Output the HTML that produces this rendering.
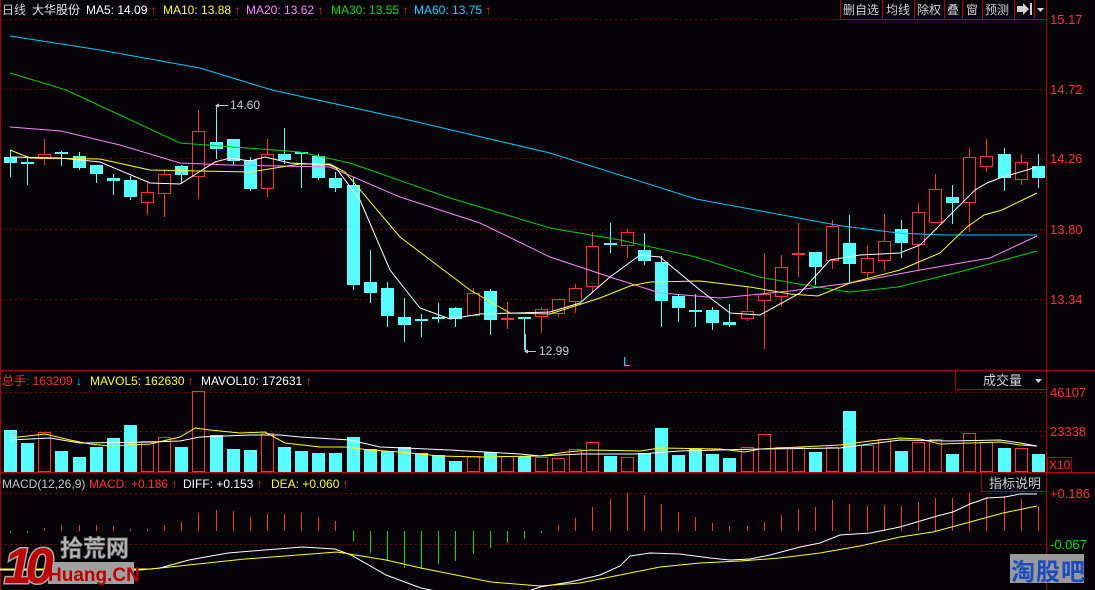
<!DOCTYPE html>
<html><head><meta charset="utf-8"><style>
html,body{margin:0;padding:0;background:#050308;width:1095px;height:590px;overflow:hidden}
svg{display:block;font-family:"Liberation Sans","Noto Sans CJK SC",sans-serif;font-size:12px}
.ar{font-weight:bold}
</style></head><body>
<svg id="s" width="1095" height="590" viewBox="0 0 1095 590" xmlns="http://www.w3.org/2000/svg">
<rect width="1095" height="590" fill="#050308"/>
<g stroke="#8a0000" stroke-width="1" stroke-dasharray="2,3">
<line x1="0" y1="19.5" x2="840" y2="19.5"/>
<line x1="0" y1="89.5" x2="1046" y2="89.5"/>
<line x1="0" y1="158.5" x2="1046" y2="158.5"/>
<line x1="0" y1="229.5" x2="1046" y2="229.5"/>
<line x1="0" y1="299.5" x2="1046" y2="299.5"/>
<line x1="0" y1="392.5" x2="1046" y2="392.5"/>
<line x1="0" y1="431.5" x2="1046" y2="431.5"/>
<line x1="0" y1="493.5" x2="1046" y2="493.5"/>
<line x1="0" y1="544.5" x2="1046" y2="544.5"/>
</g>
<g stroke="#b00000" stroke-width="1" fill="none">
<line x1="0.5" y1="0" x2="0.5" y2="590"/>
<line x1="1046.5" y1="0" x2="1046.5" y2="590"/>
<line x1="0" y1="370.5" x2="1095" y2="370.5"/>
<line x1="0" y1="472.5" x2="1095" y2="472.5"/>
<rect x="840.5" y="-1" width="206" height="20.5"/>
<line x1="882.5" y1="0" x2="882.5" y2="19"/>
<line x1="914.5" y1="0" x2="914.5" y2="19"/>
<line x1="944.5" y1="0" x2="944.5" y2="19"/>
<line x1="962.5" y1="0" x2="962.5" y2="19"/>
<line x1="982.5" y1="0" x2="982.5" y2="19"/>
<line x1="1014.5" y1="0" x2="1014.5" y2="19"/>
<line x1="1034.5" y1="0" x2="1034.5" y2="19"/>
<rect x="955.5" y="370.5" width="91" height="19"/>
<rect x="981.5" y="472.5" width="65" height="19"/>
<rect x="1047.5" y="457.5" width="24" height="15"/>
</g>
<!-- header -->
<text x="2" y="14" fill="#d0d0d0">日线</text>
<text x="32" y="14" fill="#e8e8e8">大华股份</text>
<text x="86" y="14" fill="#ffffff">MA5: 14.09 <tspan class="ar" fill="#ff3030">↑</tspan></text>
<text x="163" y="14" fill="#ffff00">MA10: 13.88 <tspan class="ar" fill="#ff3030">↑</tspan></text>
<text x="246" y="14" fill="#ff80ff">MA20: 13.62 <tspan class="ar" fill="#ff3030">↑</tspan></text>
<text x="331" y="14" fill="#00e000">MA30: 13.55 <tspan class="ar" fill="#ff3030">↑</tspan></text>
<text x="414" y="14" fill="#00d8ff">MA60: 13.75 <tspan class="ar" fill="#ff3030">↑</tspan></text>
<g fill="#d0d0d0">
<text x="843" y="14">删自选</text>
<text x="886" y="14">均线</text>
<text x="917" y="14">除权</text>
<text x="947" y="14">叠</text>
<text x="966" y="14">窗</text>
<text x="985" y="14">预测</text>
<path d="M1017 6h6v-3l6 6-6 6v-3h-6z M1030 3h2v12h-2z"/>
<path d="M1037 8h7l-3.5 4z"/>
</g>
<!-- axis labels -->
<g fill="#ff3030" font-size="13">
<text x="1050" y="24">15.17</text>
<text x="1050" y="94">14.72</text>
<text x="1050" y="163">14.26</text>
<text x="1050" y="234">13.80</text>
<text x="1050" y="304">13.34</text>
<text x="1050" y="397">46107</text>
<text x="1050" y="436">23338</text>
<text x="1049" y="469" font-size="12">X10</text>
<text x="1050" y="498">+0.186</text>
</g>
<text x="1050" y="549" fill="#00e000" font-size="13">-0.067</text>
<!-- volume header -->
<text x="2" y="385" fill="#ff3030">总手: 163209 <tspan class="ar" fill="#00e0ff">↓</tspan></text>
<text x="90" y="385" fill="#ffff00">MAVOL5: 162630 <tspan class="ar" fill="#ff3030">↑</tspan></text>
<text x="201" y="385" fill="#ffffff">MAVOL10: 172631 <tspan class="ar" fill="#ff3030">↑</tspan></text>
<text x="983" y="385" fill="#d0d0d0" font-size="13">成交量</text>
<path d="M1035 379h7l-3.5 4z" fill="#d0d0d0"/>
<!-- macd header -->
<text x="2" y="488" fill="#c8c8c8">MACD(12,26,9)</text>
<text x="89" y="488" fill="#ff3030">MACD: +0.186 <tspan class="ar">↑</tspan></text>
<text x="183" y="488" fill="#ffffff">DIFF: +0.153 <tspan class="ar" fill="#ff3030">↑</tspan></text>
<text x="271" y="488" fill="#ffff00">DEA: +0.060 <tspan class="ar" fill="#ff3030">↑</tspan></text>
<text x="989" y="488" fill="#d0d0d0" font-size="13">指标说明</text>

<g id="bars"></g>

<g fill="none" stroke-width="1">
<polyline stroke="#00c8ff" points="10,36 100,50 200,68 272,90 400,118 550,153 696,199 842,226 898,233 943,235 1037,235"/>
<polyline stroke="#00d000" points="10,73 50,85 66,90 120,115 180,143 300,152 350,163 450,198 550,228 620,240 696,257 759,277 793,283 849,292 898,287 967,270 1037,251"/>
<polyline stroke="#ff80ff" points="10,127 61,131 120,145 180,163 230,165 330,167 400,197 480,223 550,257 610,277 660,293 720,298 790,291 850,283 920,270 990,258 1037,236"/>
<polyline stroke="#ffff00" points="10,150 30,158 100,159 150,170 200,171 250,172 300,164 330,164 345,172 400,237 470,290 510,313 550,314 600,298 630,286 650,282 700,281 750,287 790,294 818,296 850,283 900,270 940,253 967,227 984,215 1002,210 1037,193"/>
<polyline stroke="#ffffff" points="10,157 60,158 100,162 150,183 180,184 215,162 230,158 250,161 265,157 290,163 330,165 336,168 360,200 390,270 420,308 450,319 480,314 550,312 580,303 610,277 640,255 660,257 700,290 730,313 760,315 800,293 830,260 860,255 900,253 920,245 950,215 975,190 987,183 1000,178 1037,167"/>
<polyline stroke="#ffff00" points="10,438 45,434 70,440 90,444 110,446 150,444 180,437 195,428 210,430 240,433 265,432 285,443 320,447 345,447 370,450 400,452 440,456 480,457 540,456 567,452 590,450 640,451 660,448 720,449 745,452 760,449 800,447 840,445 870,441 900,438 920,439 940,444 970,443 1000,442 1020,445 1037,446"/>
<polyline stroke="#ffffff" points="10,440 50,438 80,443 150,442 180,441 200,437 250,435 280,435 300,437 350,440 380,447 450,450 520,454 540,456 580,454 640,454 680,451 760,449 840,448 870,444 900,440 950,441 1000,440 1020,443 1037,446"/>
<polyline stroke="#ffffff" points="0,570 140,570 160,568 189,560 228,553 302,547 335,549 351,555 386,575 421,588 460,596 520,594 540,587 570,582 600,575 620,566 630,556 650,553 680,554 710,558 730,560 750,559 770,555 800,547 820,543 840,535 870,533 900,527 937,516 953,512 970,504 987,498 1005,497 1020,494 1037,494"/>
<polyline stroke="#ffff00" points="0,569 151,569 245,559 337,552 386,560 421,568 491,582 540,586 580,583 620,575 660,567 700,563 740,561 780,558 820,553 860,546 900,537 933,532 970,522 1003,513 1037,506"/>
</g>
<g stroke="#c8c8c8" fill="none"><path d="M216.5 120V105.5H228"/><path d="M525.5 334V351.5H536"/></g>
<path d="M215 105.5l4-2v4z M524 351.5l4-2v4z" fill="#c8c8c8"/>
<text x="230" y="109" fill="#c8c8c8" font-size="12">14.60</text>
<text x="539" y="355" fill="#c8c8c8" font-size="12">12.99</text>
<text x="623" y="366" fill="#00e0ff" font-size="13">L</text>

<!-- logos -->
<g>
<rect x="48" y="562" width="86" height="22" fill="#a0a0a0"/>
<text x="4" y="583" font-size="50" font-weight="bold" font-style="italic" fill="#c00000" stroke="#a8a8a8" stroke-width="3" paint-order="stroke" letter-spacing="-6">10</text>
<text x="60" y="556" font-size="23" font-weight="bold" fill="#b8b8b8" stroke="#707070" stroke-width="0.8">拾荒网</text>
<text x="48" y="581" font-size="19" font-weight="bold" fill="#c00000">Huang.CN</text>
</g>
<g>
<rect x="1010" y="554" width="74" height="29" fill="#9a9a9a"/>
<text x="1011" y="580" font-size="24" font-weight="bold" fill="#1a4cc0" letter-spacing="1">淘股吧</text>
</g>
</svg>
<script>
var C=[
[0,'C',157,163,150,177],[1,'C',162,162,156,185],[2,'R',154,159,139,165],[3,'C',152,154,151,166],[4,'C',156,168,152,170],[5,'C',165,174,165,183],[6,'C',178,181,174,195],[7,'C',180,197,176,200],[8,'R',192,203,183,215],[9,'R',174,194,169,217],[10,'C',166,175,165,184],[11,'R',131,177,110,199],[12,'C',142,149,105,159],[13,'C',139,161,139,165],[14,'C',160,189,157,191],[15,'R',154,189,139,197],[16,'C',154,160,128,164],[17,'C',152,154,152,188],[18,'C',156,178,154,180],[19,'C',178,188,172,192],[20,'C',185,285,177,290],[21,'C',282,293,250,303],[22,'C',288,316,282,327],[23,'C',317,325,298,342],[24,'C',319,319,314,337],[25,'C',317,319,303,323],[26,'C',308,319,307,327],[27,'R',293,316,288,317],[28,'C',291,320,289,335],[29,'R',318,318,302,329],[30,'C',317,319,317,350],[31,'R',309,317,307,333],[32,'R',299,314,299,317],[33,'R',288,302,284,313],[34,'R',246,287,232,293],[35,'C',243,243,223,253],[36,'R',232,246,229,258],[37,'C',250,261,233,265],[38,'C',262,301,256,327],[39,'C',296,308,294,322],[40,'C',310,310,294,327],[41,'C',310,323,307,330],[42,'C',322,325,304,327],[43,'R',311,319,287,321],[44,'R',294,301,253,349],[45,'R',267,297,255,307],[46,'R',253,255,223,277],[47,'C',252,267,252,285],[48,'R',226,261,220,269],[49,'C',243,264,215,283],[50,'R',258,273,246,279],[51,'R',241,261,214,271],[52,'C',229,243,220,258],[53,'R',212,245,203,271],[54,'R',189,223,174,223],[55,'C',197,203,185,224],[56,'R',157,203,148,232],[57,'R',156,167,139,172],[58,'C',154,178,148,191],[59,'R',162,180,154,185],[60,'C',166,178,154,188]];
var V=[[430,'C'],[443,'C'],[432,'R'],[451,'C'],[457,'C'],[447,'C'],[438,'C'],[425,'C'],[441,'R'],[437,'R'],[447,'C'],[391,'R'],[435,'C'],[449,'C'],[450,'C'],[433,'R'],[447,'C'],[451,'C'],[453,'C'],[453,'C'],[437,'C'],[449,'C'],[451,'C'],[447,'C'],[453,'C'],[455,'C'],[461,'C'],[456,'R'],[452,'C'],[456,'R'],[456,'C'],[457,'R'],[458,'R'],[449,'R'],[442,'R'],[456,'C'],[457,'R'],[453,'C'],[428,'C'],[455,'C'],[449,'C'],[454,'C'],[458,'C'],[447,'R'],[434,'R'],[447,'R'],[447,'R'],[452,'C'],[447,'R'],[411,'C'],[445,'R'],[439,'R'],[451,'C'],[442,'R'],[439,'R'],[454,'C'],[433,'R'],[442,'R'],[448,'C'],[448,'R'],[454,'C']];
var M=[533,533,528,525,525,525,526,529,529,525,522,513,510,511,517,514,514,513,517,521,541,553,560,568,569,564,561,554,548,543,539,533,525,518,507,499,493,495,504,512,517,523,526,526,522,515,509,507,500,504,506,505,506,502,498,498,493,497,496,499,506];
var RED='#ff3232',CY='#55ffff',h='';
function X(i){return Math.round(10+17.13*i);}
for(var k=0;k<V.length;k++){var x=X(k),t=V[k][0];
 if(V[k][1]=='R')h+='<rect x="'+(x-6+.5)+'" y="'+(t+.5)+'" width="12" height="'+(472-t-1)+'" fill="none" stroke="'+RED+'"/>';
 else h+='<rect x="'+(x-6)+'" y="'+t+'" width="13" height="'+(472-t)+'" fill="'+CY+'"/>';}
for(var k=0;k<M.length;k++){var x=X(k)+.5,y=M[k];
 h+='<line x1="'+x+'" x2="'+x+'" y1="531" y2="'+y+'" stroke="'+(y>531?'#00e000':RED)+'"/>';}
for(var k=0;k<C.length;k++){var d=C[k],x=X(d[0]),col=d[1]=='R'?RED:CY;
 h+='<line x1="'+(x+.5)+'" x2="'+(x+.5)+'" y1="'+d[4]+'" y2="'+d[5]+'" stroke="'+col+'"/>';
 if(d[3]-d[2]<2){h+='<rect x="'+(x-6)+'" y="'+d[2]+'" width="13" height="2" fill="'+col+'"/>';}
 else if(d[1]=='R'){h+='<rect x="'+(x-6+.5)+'" y="'+(d[2]+.5)+'" width="12" height="'+(d[3]-d[2]-1)+'" fill="#050308" stroke="'+RED+'"/>';}
 else h+='<rect x="'+(x-6)+'" y="'+d[2]+'" width="13" height="'+(d[3]-d[2])+'" fill="'+CY+'"/>';}
document.getElementById('bars').innerHTML=h;
</script>
</body></html>
